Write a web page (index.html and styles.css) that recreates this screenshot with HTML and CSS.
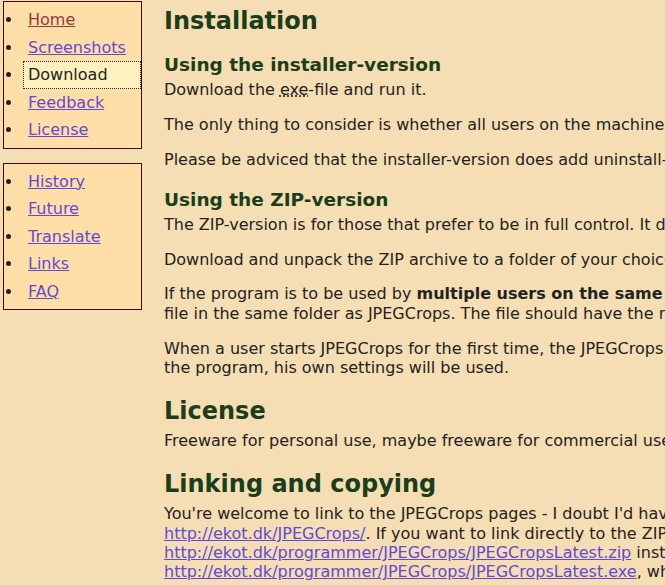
FILE: index.html
```html
<!DOCTYPE html>
<html lang="en">
<head>
  <meta charset="UTF-8">
  <title>JPEGCrops - Download</title>
  <link rel="stylesheet" href="styles.css">
</head>
<body>
  <div class="page">
    <div class="sidebar">
      <ul class="menu">
        <li><a href="index.html" class="visited">Home</a></li>
        <li><a href="screenshots.html">Screenshots</a></li>
        <li class="current"><span>Download</span></li>
        <li><a href="feedback.html">Feedback</a></li>
        <li><a href="license.html">License</a></li>
      </ul>
      <ul class="menu">
        <li><a href="history.html">History</a></li>
        <li><a href="future.html">Future</a></li>
        <li><a href="translate.html">Translate</a></li>
        <li><a href="links.html">Links</a></li>
        <li><a href="faq.html">FAQ</a></li>
      </ul>
    </div>

    <div class="content">
      <h1>Installation</h1>

      <h2>Using the installer-version</h2>
      <p>Download the <abbr title="executable">exe</abbr>-file and run it.</p>
      <p>The only thing to consider is whether all users on the machine should share settings.</p>
      <p>Please be adviced that the installer-version does add uninstall-information to the registry.</p>

      <h2>Using the ZIP-version</h2>
      <p>The ZIP-version is for those that prefer to be in full control. It doesn't touch the registry.</p>
      <p>Download and unpack the ZIP archive to a folder of your choice.</p>
      <p>If the program is to be used by <b>multiple users on the same machine</b>, place an empty ini-<br>file in the same folder as JPEGCrops. The file should have the name JPEGCrops.ini.</p>
      <p>When a user starts JPEGCrops for the first time, the JPEGCrops.ini file is copied. Next time<br>the program, his own settings will be used.</p>

      <h1>License</h1>
      <p>Freeware for personal use, maybe freeware for commercial use too.</p>

      <h1>Linking and copying</h1>
      <p>You're welcome to link to the JPEGCrops pages - I doubt I'd have any objections. Please link to<br>
        <a href="http://ekot.dk/JPEGCrops/">http://ekot.dk/JPEGCrops/</a>. If you want to link directly to the ZIP-file, use<br>
        <a href="http://ekot.dk/programmer/JPEGCrops/JPEGCropsLatest.zip">http://ekot.dk/programmer/JPEGCrops/JPEGCropsLatest.zip</a> instead, and for the installer<br>
        <a href="http://ekot.dk/programmer/JPEGCrops/JPEGCropsLatest.exe">http://ekot.dk/programmer/JPEGCrops/JPEGCropsLatest.exe</a>, which always points to the newest.</p>
    </div>
  </div>
</body>
</html>
```

FILE: styles.css
```css
html, body {
  overflow: hidden;
}
body {
  margin: 0;
  font-family: Verdana, "DejaVu Sans", sans-serif;
  font-size: 16px;
  line-height: 19.3px;
  background-color: #f5deb3;
  color: #222;
}
a {
  color: #5f4bd6;
}
a.visited {
  color: #943a3a;
}
.page {
  display: flex;
  align-items: flex-start;
}
.sidebar {
  flex: 0 0 139px;
  margin-left: 3px;
  margin-top: 1px;
}
.menu {
  list-style: disc;
  margin: 0 0 14px 0;
  padding: 4px 0 4px 19px;
  background-color: #ffdea8;
  border: 1px solid #3a0a0a;
}
.menu li a,
.menu li span {
  display: block;
  padding: 3px 4px;
  line-height: 1.22;
  border: 1px solid transparent;
}
.menu li.current span {
  background-color: #fff0c0;
  border: 1px dotted #222;
}
.content {
  flex: 0 0 auto;
  width: 820px;
  margin-left: 22px;
}
h1 {
  font-size: 24px;
  line-height: 29px;
  color: #1c3d1a;
  margin: 7px 0 5px 0;
}
h2 {
  font-size: 18.5px;
  line-height: 23px;
  color: #1c3d1a;
  margin: 19px 0 4px 0;
}
h1 + h2 {
  margin-top: 17px;
}
p {
  margin: 0 0 15.5px 0;
}
p + h1 {
  margin-top: 20px;
}
```
